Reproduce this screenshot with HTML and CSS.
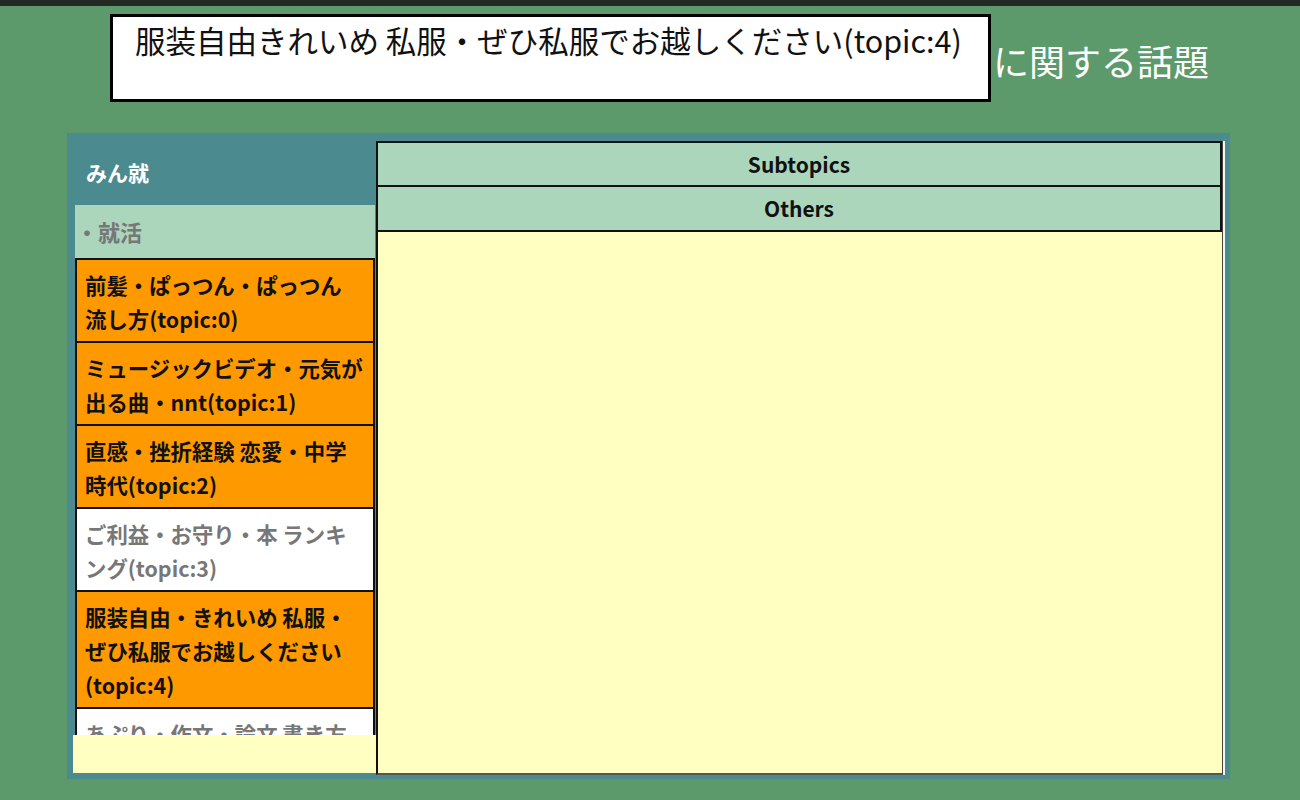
FILE: index.html
```html
<!DOCTYPE html>
<html lang="ja">
<head>
<meta charset="utf-8">
<title>話題</title>
<link rel="stylesheet" href="styles.css">
</head>
<body>
<div class="topbar"></div>
<header class="head">
  <div class="title-box">服装自由きれいめ 私服・ぜひ私服でお越しください(topic:4)</div>
  <div class="title-suffix">に関する話題</div>
</header>
<section class="panel">
  <aside class="sidebar">
    <div class="side-head">みん就</div>
    <div class="group">・就活</div>
    <ul class="topics">
      <li class="topic hot">前髪・ぱっつん・ぱっつん 流し方(topic:0)</li>
      <li class="topic hot">ミュージックビデオ・元気が出る曲・nnt(topic:1)</li>
      <li class="topic hot">直感・挫折経験 恋愛・中学時代(topic:2)</li>
      <li class="topic">ご利益・お守り・本 ランキング(topic:3)</li>
      <li class="topic hot">服装自由・きれいめ 私服・ぜひ私服でお越しください(topic:4)</li>
      <li class="topic">あぷり・作文・論文 書き方(topic:5)</li>
      <li class="topic hot">面接・一次面接・最終面接 結果(topic:6)</li>
    </ul>
    <div class="side-foot"></div>
  </aside>
  <main class="main">
    <div class="tab">Subtopics</div>
    <div class="tab">Others</div>
    <div class="main-body"></div>
  </main>
</section>
</body>
</html>
```
FILE: styles.css
```css
html, body {
  margin: 0;
  padding: 0;
}
body {
  background: #5c9a6b;
  font-family: "Noto Sans CJK JP", "Noto Sans", sans-serif;
  width: 1300px;
  height: 800px;
  overflow: hidden;
}
.topbar {
  height: 6px;
  background: #232a24;
}
.head {
  display: flex;
  align-items: flex-start;
  margin: 8px 0 0 110px;
}
.title-box {
  box-sizing: border-box;
  width: 881px;
  height: 88px;
  border: 3px solid #000;
  background: #fff;
  color: #111;
  font-size: 30.5px;
  line-height: 36px;
  padding: 5px 0 0 22px;
  white-space: nowrap;
}
.title-suffix {
  color: #fff;
  font-size: 36px;
  line-height: 43px;
  margin: 25px 0 0 2px;
  white-space: nowrap;
}
.panel {
  box-sizing: border-box;
  display: flex;
  width: 1163px;
  height: 646px;
  margin: 31px 0 0 67px;
  padding: 6px 7px 4px 6px;
  background: #4b8a8f;
}
.sidebar {
  width: 303px;
  display: flex;
  flex-direction: column;
  flex: none;
}
.side-head {
  height: 66px;
  line-height: 66px;
  color: #fff;
  font-weight: 700;
  font-size: 21px;
  padding-left: 13px;
}
.group {
  box-sizing: border-box;
  width: 300px;
  margin-left: 2px;
  height: 53px;
  line-height: 53px;
  background: #acd6bc;
  color: #777;
  font-weight: 700;
  font-size: 22px;
  padding-left: 1px;
}
.topics {
  list-style: none;
  margin: 0 0 0 2px;
  padding: 0;
  width: 300px;
  height: 477px;
  overflow: hidden;
  flex: none;
}
.topic {
  box-sizing: border-box;
  border: 2px solid #111;
  margin-top: -2px;
  padding: 8px 7px 5px 8px;
  font-size: 21.4px;
  line-height: 34px;
  font-weight: 700;
  color: #777;
  background: #fff;
}
.topic:first-child {
  margin-top: 0;
}
.topic.hot {
  background: #ff9900;
  color: #111;
}
.side-foot {
  flex: 1;
  background: #ffffc2;
  margin-bottom: 2px;
}
.main {
  box-sizing: border-box;
  width: 847px;
  flex: none;
  margin-top: 2px;
  display: flex;
  flex-direction: column;
  background: #ffffc2;
  border-left: 2px solid #111;
  border-right: 1px solid #444;
  border-bottom: 2px solid #555;
  box-shadow: 2px 0 0 #f6f6ea;
}
.tab {
  box-sizing: border-box;
  height: 46px;
  line-height: 42px;
  border: 2px solid #111;
  border-left: 0;
  background: #acd6bc;
  text-align: center;
  font-size: 21px;
  font-weight: 700;
  color: #111;
}
.tab + .tab {
  border-top: 0;
  height: 45px;
  line-height: 43px;
}
.main-body {
  flex: 1;
}
```
